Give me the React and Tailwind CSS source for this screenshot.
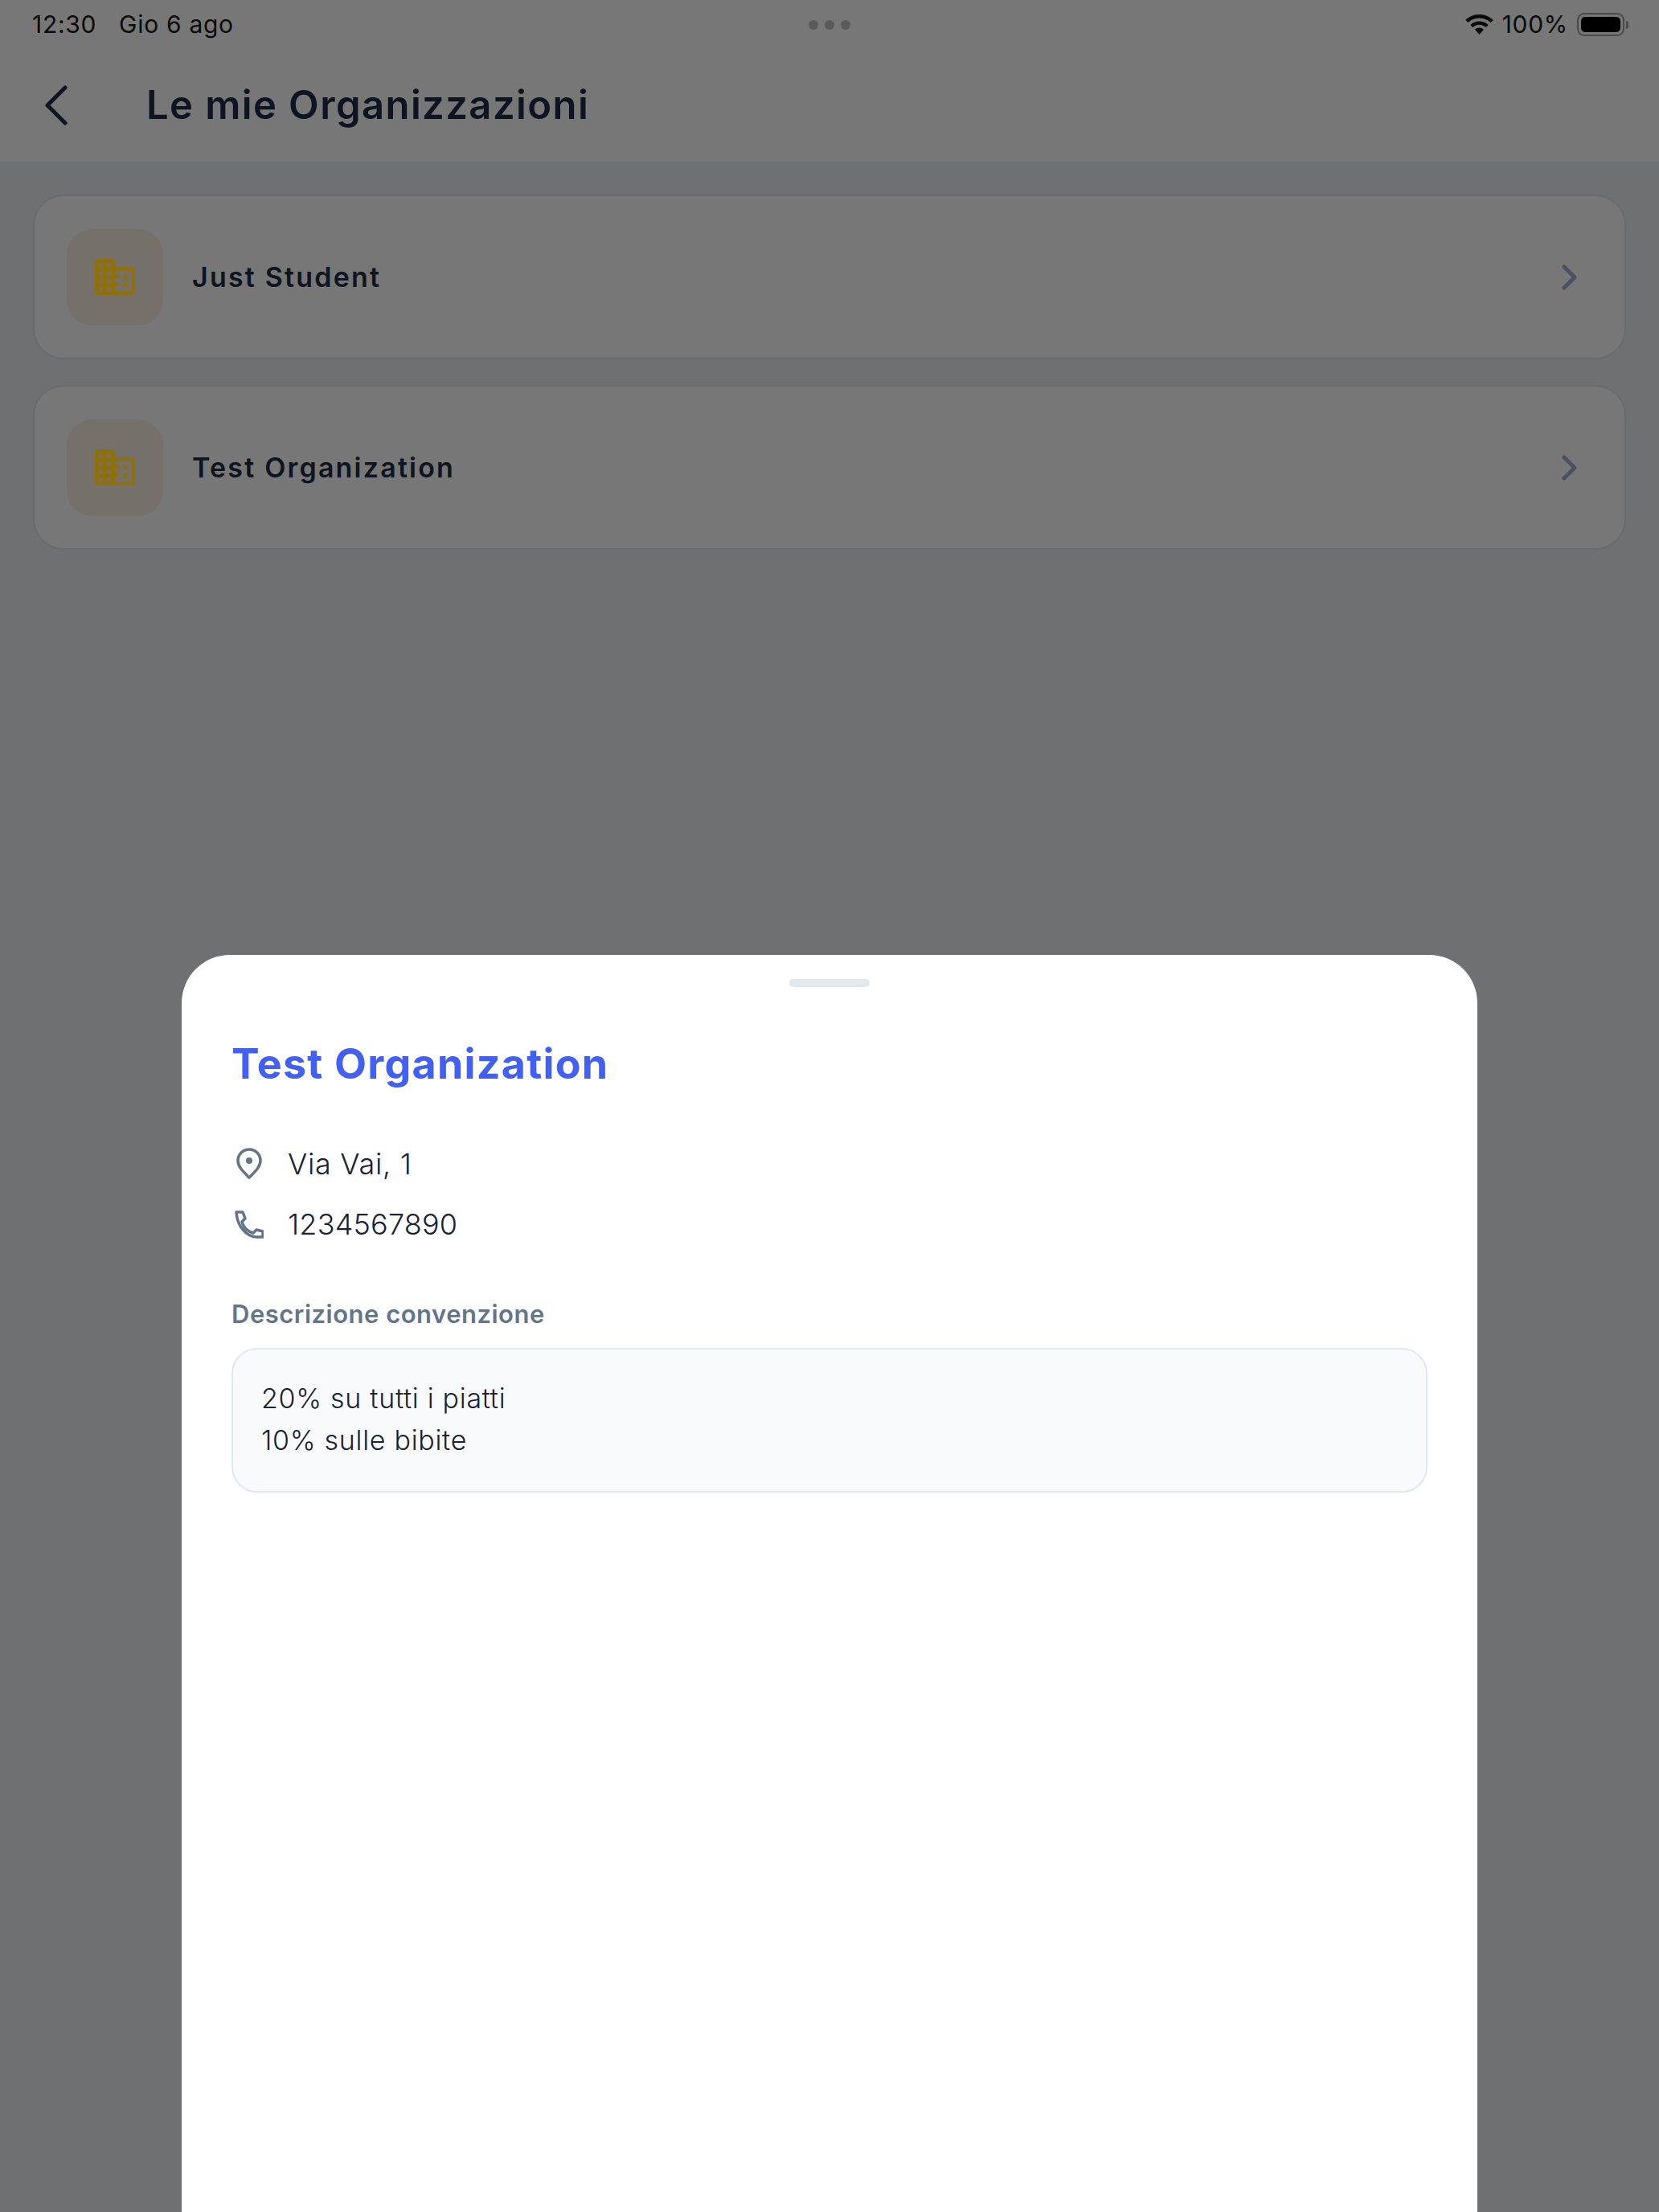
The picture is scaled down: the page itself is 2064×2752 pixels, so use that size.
import React from 'react';

const orgs = ['Just Student', 'Test Organization'];

const BuildingIcon = () => (
    <svg width="50" height="45" viewBox="0 0 150 135" className="text-[#8f700f]">
        <path fill="currentColor" fillRule="evenodd" d="M14 0h47a14 14 0 0 1 14 14v16h63a12 12 0 0 1 12 12v81a12 12 0 0 1-12 12H14a14 14 0 0 1-14-14V14A14 14 0 0 1 14 0zM15 17v14h15V17zM45 17v14h15V17zM15 47v14h15V47zM45 47v14h15V47zM15 77v14h15V77zM45 77v14h15V77zM15 107v14h15v-14zM45 107v14h15v-14zM75 44v14h17v14H75v16h17v14H75v19h62V44z" />
        <rect x="105" y="60" width="17" height="17" fill="currentColor" />
        <rect x="105" y="90" width="17" height="17" fill="currentColor" />
    </svg>
);

const OrgCard = ({ name }) => (
    <div className="flex h-[205px] items-center rounded-[38px] border-2 border-[#696b6f] bg-[#777777] pl-[40px] pr-[58px]">
        <div className="flex h-[120px] w-[120px] items-center justify-center rounded-[32px] bg-[#75716a]">
            <BuildingIcon />
        </div>
        <span className="ml-[36px] text-[34px] font-semibold tracking-[2.2px] text-[#0e1420]">{name}</span>
        <svg className="ml-auto" width="20" height="32" viewBox="0 0 20 32" fill="none" stroke="#4a5260" strokeWidth="5" strokeLinecap="round" strokeLinejoin="round">
            <path d="M3 3l13 13L3 29" />
        </svg>
    </div>
);

const App = () => {
    return (
        <div className="relative h-[2752px] w-[2064px] overflow-hidden bg-[#6f7072] [font-family:Inter,sans-serif]">
            <div className="h-[201px] bg-[#777777]">
                <div className="relative flex h-[60px] items-center justify-between pl-[40px] pr-[38px] pt-[1px] text-[30px] tracking-[0.7px] text-[#0a0a0a]">
                    <div className="flex gap-[28px]">
                        <span>12:30</span>
                        <span>Gio 6 ago</span>
                    </div>
                    <div className="absolute left-[1006px] top-[25px] flex gap-[8px]">
                        <span className="h-[12px] w-[12px] rounded-full bg-[#5a5a5a]"></span>
                        <span className="h-[12px] w-[12px] rounded-full bg-[#5a5a5a]"></span>
                        <span className="h-[12px] w-[12px] rounded-full bg-[#5a5a5a]"></span>
                    </div>
                    <div className="flex items-center gap-[11px]">
                        <svg width="35" height="26" viewBox="0 0 35 26" fill="#0a0a0a">
                            <path d="M17.5 0C10.8 0 4.8 2.6 0.4 6.9l3 3.2C7 6.6 12 4.4 17.5 4.4s10.5 2.2 14.1 5.7l3-3.2C30.2 2.6 24.2 0 17.5 0z" />
                            <path d="M17.5 8.4c-4.4 0-8.3 1.7-11.2 4.5l3 3.2c2.1-2 5-3.3 8.2-3.3s6.1 1.3 8.2 3.3l3-3.2c-2.9-2.8-6.8-4.5-11.2-4.5z" />
                            <path d="M17.5 16.6c-2.2 0-4.1.8-5.5 2.2l5.5 6.2 5.5-6.2c-1.4-1.4-3.3-2.2-5.5-2.2z" />
                        </svg>
                        <span>100%</span>
                        <div className="flex items-center">
                            <div className="flex h-[29px] w-[59px] rounded-[9px] border-2 border-[#4a4a4a] p-[3px]">
                                <div className="flex-1 rounded-[5px] bg-black"></div>
                            </div>
                            <div className="ml-[2px] h-[10px] w-[3px] rounded-r-full bg-[#4a4a4a]"></div>
                        </div>
                    </div>
                </div>
                <div className="flex h-[141px] items-center pl-[55px]">
                    <svg width="30" height="50" viewBox="0 0 30 50" fill="none" stroke="#0e1420" strokeWidth="5" strokeLinecap="round" strokeLinejoin="round">
                        <path d="M26 3L4 25l22 22" />
                    </svg>
                    <h1 className="ml-[97px] text-[49px] font-semibold tracking-[1.4px] text-[#0e1420]">Le mie Organizzazioni</h1>
                </div>
            </div>

            <div className="flex flex-col gap-[32px] px-[41px] pt-[41px]">
                {orgs.map(org => <OrgCard key={org} name={org} />)}
            </div>

            <div className="absolute bottom-0 left-[226px] top-[1188px] w-[1612px] rounded-t-[60px] bg-white px-[62px]">
                <div className="mx-auto mt-[30px] h-[10px] w-[100px] rounded-full bg-[#e2e8f0]"></div>
                <h2 className="mt-[64px] text-[52px] font-bold leading-[64px] tracking-[1.2px] text-[#4361ee]">Test Organization</h2>
                <div className="mt-[66px] flex flex-col gap-[23px] text-[36px] font-light leading-[52px] tracking-[0.2px] text-[#1a2236]">
                    <div className="flex items-center gap-[30px]">
                        <svg className="ml-[4px]" width="36" height="40" viewBox="0 0 36 40" fill="none" stroke="#64748b" strokeWidth="3.5" strokeLinejoin="round">
                            <path d="M18 37C11 30 4 24 4 16a14 14 0 0 1 28 0c0 8-7 14-14 21z" />
                            <circle cx="18" cy="16" r="4" fill="#64748b" stroke="none" />
                        </svg>
                        <span className="tracking-[0.7px]">Via Vai, 1</span>
                    </div>
                    <div className="flex items-center gap-[30px]">
                        <svg className="ml-[4px]" width="36" height="40" viewBox="0 0 36 40" fill="none" stroke="#64748b" strokeWidth="3.5" strokeLinejoin="round">
                            <path d="M2 5h8l3 8-4 4c2 7 7 12 14 14l4-4 8 2v7h-7C14 36 3 22 2 5z" />
                        </svg>
                        <span>1234567890</span>
                    </div>
                </div>
                <div className="mt-[64px] text-[31px] font-semibold leading-[44px] tracking-[0.5px] text-[#64748b]">Descrizione convenzione</div>
                <div className="mt-[20px] h-[180px] w-[1488px] rounded-[32px] border-2 border-[#e2e8f0] bg-[#f8fafc] pl-[35px] pr-[36px] pt-[35px] text-[34px] font-light leading-[52px] tracking-[0.7px] text-[#1a2236]">
                    <p>20% su tutti i piatti</p>
                    <p>10% sulle bibite</p>
                </div>
            </div>
        </div>
    );
};

export default App;
